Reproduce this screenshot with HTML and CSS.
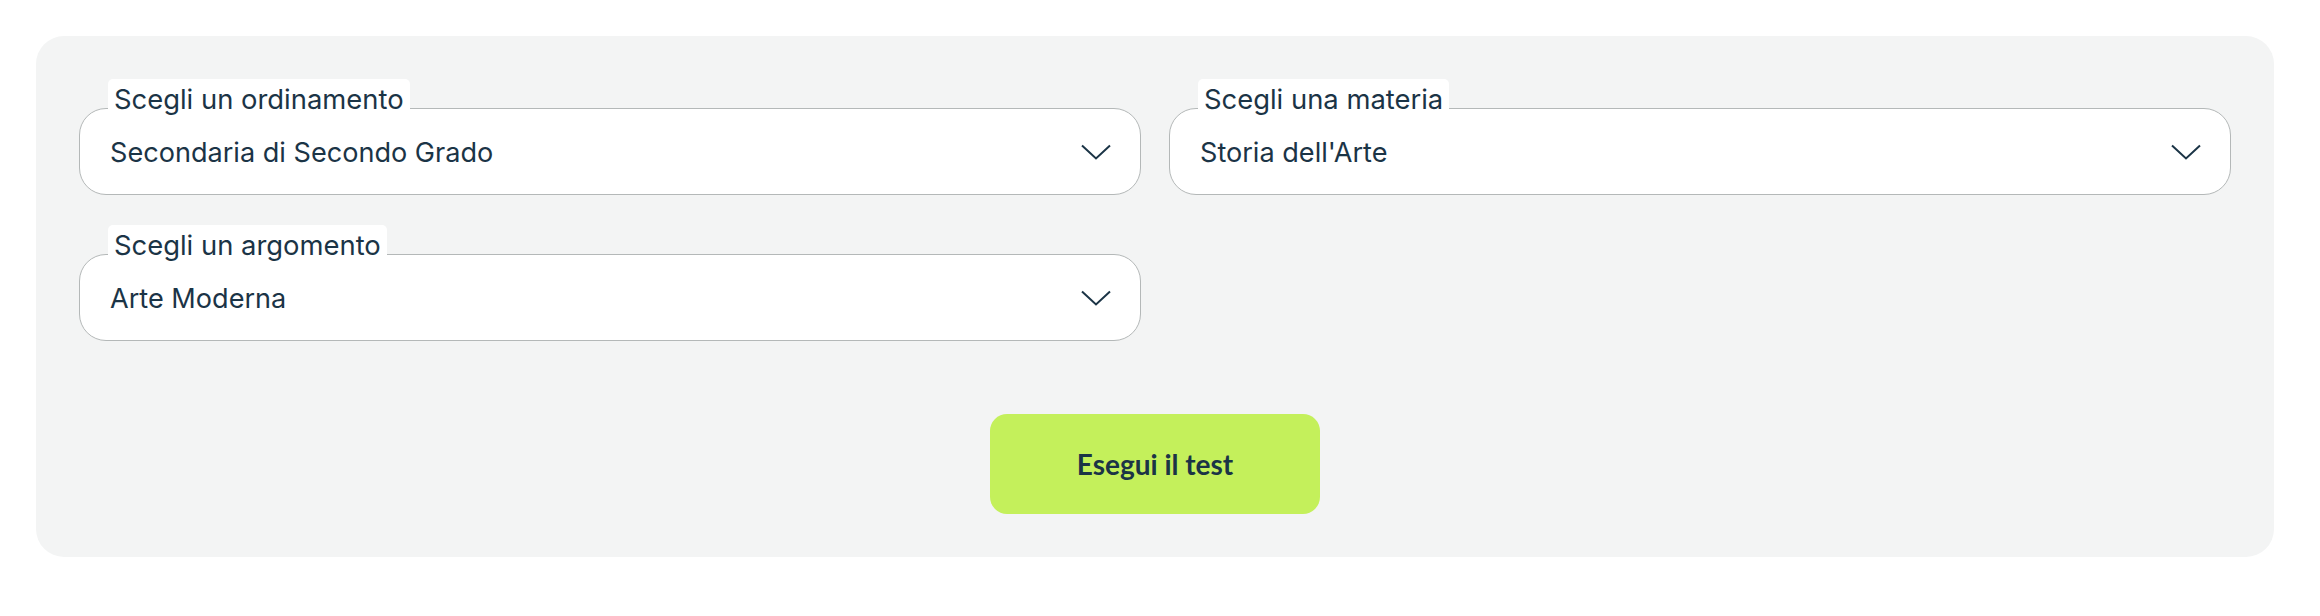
FILE: index.html
```html
<!DOCTYPE html>
<html lang="it">
<head>
<meta charset="utf-8">
<title>Test</title>
<link rel="stylesheet" href="styles.css">
</head>
<body>
<div class="page">
  <form class="panel">
    <div class="grid">
      <div class="field">
        <span class="label">Scegli un ordinamento</span>
        <div class="select">
          <span class="value">Secondaria di Secondo Grado</span>
          <svg class="chev" width="30" height="16" viewBox="0 0 30 16"><path d="M1 1.5 L15 14.5 L29 1.5" fill="none" stroke="#1b3446" stroke-width="2"/></svg>
        </div>
      </div>
      <div class="field">
        <span class="label">Scegli una materia</span>
        <div class="select">
          <span class="value">Storia dell'Arte</span>
          <svg class="chev" width="30" height="16" viewBox="0 0 30 16"><path d="M1 1.5 L15 14.5 L29 1.5" fill="none" stroke="#1b3446" stroke-width="2"/></svg>
        </div>
      </div>
      <div class="field">
        <span class="label">Scegli un argomento</span>
        <div class="select">
          <span class="value">Arte Moderna</span>
          <svg class="chev" width="30" height="16" viewBox="0 0 30 16"><path d="M1 1.5 L15 14.5 L29 1.5" fill="none" stroke="#1b3446" stroke-width="2"/></svg>
        </div>
      </div>
    </div>
    <div class="actions">
      <button type="button" class="btn">Esegui il test</button>
    </div>
  </form>
</div>
</body>
</html>
```

FILE: styles.css
```css
html, body {
  margin: 0;
  padding: 0;
  background: #ffffff;
}
.page {
  padding: 36px 46px 59px 36px;
  font-family: Inter, "Noto Sans", sans-serif;
  color: #1b3446;
}
.panel {
  background: #f3f4f4;
  border-radius: 28px;
  padding: 43px;
  margin: 0;
}
.grid {
  display: grid;
  grid-template-columns: 1fr 1fr;
  column-gap: 28px;
  row-gap: 30px;
}
.field {
  position: relative;
  padding-top: 29px;
}
.label {
  position: absolute;
  top: 0;
  left: 29px;
  z-index: 1;
  background: #ffffff;
  border-radius: 5px;
  padding: 4px 6px 0;
  font-size: 27.4px;
  line-height: 33px;
  height: 33px;
}
.select {
  height: 87px;
  box-sizing: border-box;
  background: #ffffff;
  border: 1px solid #b4b8b8;
  border-radius: 27px;
  display: flex;
  align-items: center;
  justify-content: space-between;
  padding: 0 29px 0 30px;
}
.value {
  font-size: 27.1px;
  line-height: 32px;
  padding-top: 2px;
}
.chev {
  display: block;
}
.actions {
  display: flex;
  justify-content: center;
  margin-top: 73px;
}
.btn {
  width: 330px;
  height: 100px;
  border: none;
  border-radius: 17px;
  background: #c4f05b;
  color: #1b3446;
  font-family: Lato, "Noto Sans", sans-serif;
  font-weight: 700;
  font-size: 28px;
  padding: 0;
  cursor: pointer;
}
```
